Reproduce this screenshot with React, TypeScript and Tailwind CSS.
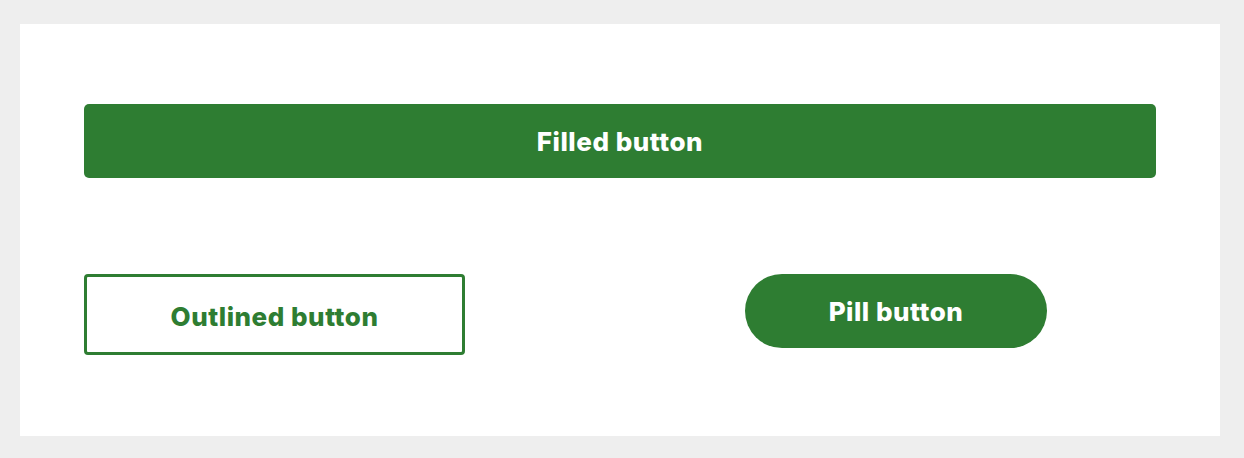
import React from 'react';

const App: React.FC = () => {
  return (
    <div className="min-h-screen bg-[#eeeeee] pl-5 pr-6 pt-6 pb-[22px] font-['Inter',sans-serif]">
      <div className="bg-white px-16 pt-20 pb-[81px]">
        <button className="flex h-[74px] w-full items-center justify-center rounded-[5px] bg-[#2e7d32] text-[26px] font-extrabold tracking-[0.02em] text-white">
          Filled button
        </button>

        <div className="mt-24 flex items-start">
          <button className="flex h-[81px] w-[381px] items-center justify-center rounded-[4px] border-[3px] border-[#2e7d32] bg-white pt-1 text-[26px] font-extrabold tracking-[0.02em] text-[#2e7d32]">
            Outlined button
          </button>
          <button className="ml-[280px] flex h-[74px] w-[302px] items-center justify-center rounded-full bg-[#2e7d32] text-[26px] font-extrabold tracking-[0.02em] text-white">
            Pill button
          </button>
        </div>
      </div>
    </div>
  );
};

export default App;
